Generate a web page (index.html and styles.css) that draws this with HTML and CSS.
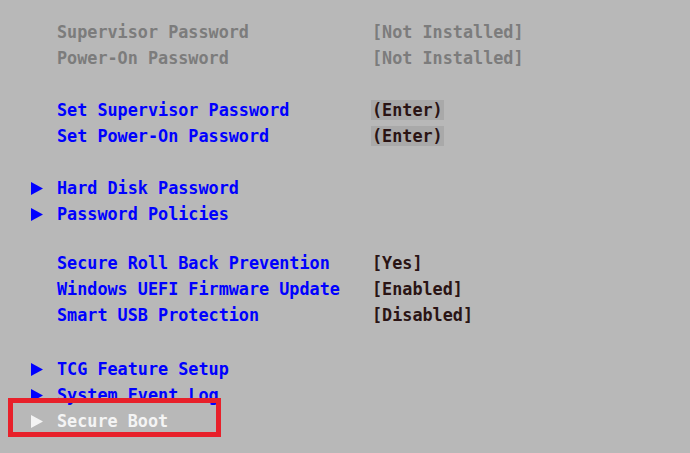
FILE: index.html
```html
<!DOCTYPE html>
<html>
<head>
<meta charset="utf-8">
<link rel="stylesheet" href="styles.css">
</head>
<body>
<div class="menu">
  <div class="row gray"><span class="arrow"></span><span class="label">Supervisor Password</span><span class="value">[Not Installed]</span></div>
  <div class="row gray"><span class="arrow"></span><span class="label">Power-On Password</span><span class="value">[Not Installed]</span></div>
  <div class="row blank"></div>
  <div class="row blue"><span class="arrow"></span><span class="label">Set Supervisor Password</span><span class="value dark"><span class="hl">(Enter)</span></span></div>
  <div class="row blue"><span class="arrow"></span><span class="label">Set Power-On Password</span><span class="value dark"><span class="hl">(Enter)</span></span></div>
  <div class="row blank"></div>
  <div class="row blue"><span class="arrow"><svg viewBox="0 0 12 13" width="12" height="13"><path d="M0 0 L12 6.5 L0 13 Z" fill="#0000ff"/></svg></span><span class="label">Hard Disk Password</span></div>
  <div class="row blue"><span class="arrow"><svg viewBox="0 0 12 13" width="12" height="13"><path d="M0 0 L12 6.5 L0 13 Z" fill="#0000ff"/></svg></span><span class="label">Password Policies</span></div>
  <div class="row blank short"></div>
  <div class="row blue"><span class="arrow"></span><span class="label">Secure Roll Back Prevention</span><span class="value dark">[Yes]</span></div>
  <div class="row blue"><span class="arrow"></span><span class="label">Windows UEFI Firmware Update</span><span class="value dark">[Enabled]</span></div>
  <div class="row blue"><span class="arrow"></span><span class="label">Smart USB Protection</span><span class="value dark">[Disabled]</span></div>
  <div class="row blank tall"></div>
  <div class="row blue"><span class="arrow"><svg viewBox="0 0 12 13" width="12" height="13"><path d="M0 0 L12 6.5 L0 13 Z" fill="#0000ff"/></svg></span><span class="label">TCG Feature Setup</span></div>
  <div class="row blue"><span class="arrow"><svg viewBox="0 0 12 13" width="12" height="13"><path d="M0 0 L12 6.5 L0 13 Z" fill="#0000ff"/></svg></span><span class="label">System Event Log</span></div>
  <div class="row white selected"><span class="arrow"><svg viewBox="0 0 12 13" width="12" height="13"><path d="M0 0 L12 6.5 L0 13 Z" fill="#f4f4f4"/></svg></span><span class="label">Secure Boot</span></div>
</div>
</body>
</html>
```
FILE: styles.css
```css
html, body {
  margin: 0;
  padding: 0;
  background: #b8b8b8;
  width: 690px;
  height: 453px;
  overflow: hidden;
}
.menu {
  padding-top: 19px;
  font-family: "DejaVu Sans Mono", "Liberation Mono", monospace;
  font-size: 16.8px;
  font-weight: bold;
}
.row {
  display: flex;
  align-items: center;
  height: 26px;
  line-height: 26px;
  padding-left: 31px;
  position: relative;
  white-space: pre;
}
.row.blank { height: 26px; }
.row.short { height: 23px; }
.row.tall { height: 28px; }
.arrow {
  width: 26px;
  display: flex;
  align-items: center;
}
.arrow svg { display: block; }
.label {
  width: 315px;
}
.gray { color: #7c7c7c; }
.blue { color: #0000ff; }
.white { color: #f4f4f4; }
.value.dark { color: #2a1414; }
.hl {
  background: #a9a9a9;
  display: inline-block;
  line-height: 20px;
  margin-left: -1px;
  padding: 0 1px;
}
.selected::after {
  content: "";
  position: absolute;
  left: 8px;
  top: -10px;
  width: 203px;
  height: 29px;
  border: 5px solid #e8202a;
}
```
